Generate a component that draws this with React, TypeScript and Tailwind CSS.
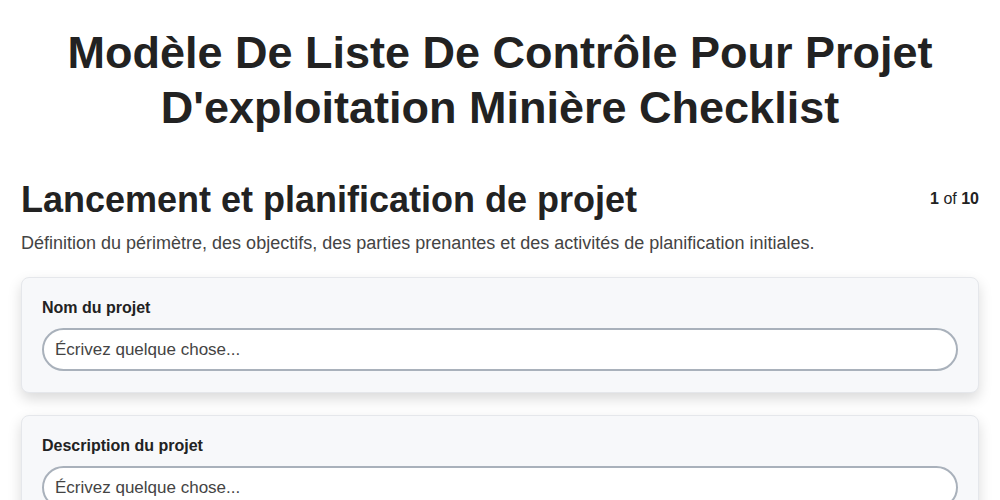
const FIELDS = ["Nom du projet", "Description du projet", "Objectifs du projet"];

export default function App() {
  return (
    <div className="min-h-screen bg-white text-[#222] font-['Liberation_Sans',Arial,sans-serif]">
      <h1 className="pt-[25px] px-[40px] text-center text-[45px] leading-[55px] font-bold">
        Modèle De Liste De Contrôle Pour Projet D'exploitation Minière Checklist
      </h1>

      <div className="px-[21px] mt-[43px]">
        <div className="flex items-start justify-between">
          <h2 className="text-[36px] leading-[44px] font-bold">
            Lancement et planification de projet
          </h2>
          <div className="pt-[9px] text-[16px]">
            <span className="font-bold">1</span> of <span className="font-bold">10</span>
          </div>
        </div>
        <p className="mt-[9px] text-[18px] leading-[24px] text-[#444]">
          Définition du périmètre, des objectifs, des parties prenantes et des activités de planification initiales.
        </p>

        <div className="mt-[22px] flex flex-col gap-[22px]">
          {FIELDS.map((f) => (
            <div
              key={f}
              className="rounded-lg border border-gray-200 bg-[#f7f8fa] px-[20px] pt-[20px] pb-[21px] shadow-[0_6px_14px_rgba(0,0,0,0.15)]"
            >
              <label className="block text-[16px] font-bold leading-[20px]">{f}</label>
              <input
                type="text"
                placeholder="Écrivez quelque chose..."
                className="mt-[10px] w-full h-[43px] rounded-[22px] border-2 border-[#a9b1bb] bg-white px-[11px] text-[17px] placeholder:text-[#444] outline-none"
              />
            </div>
          ))}
        </div>
      </div>
    </div>
  );
}
